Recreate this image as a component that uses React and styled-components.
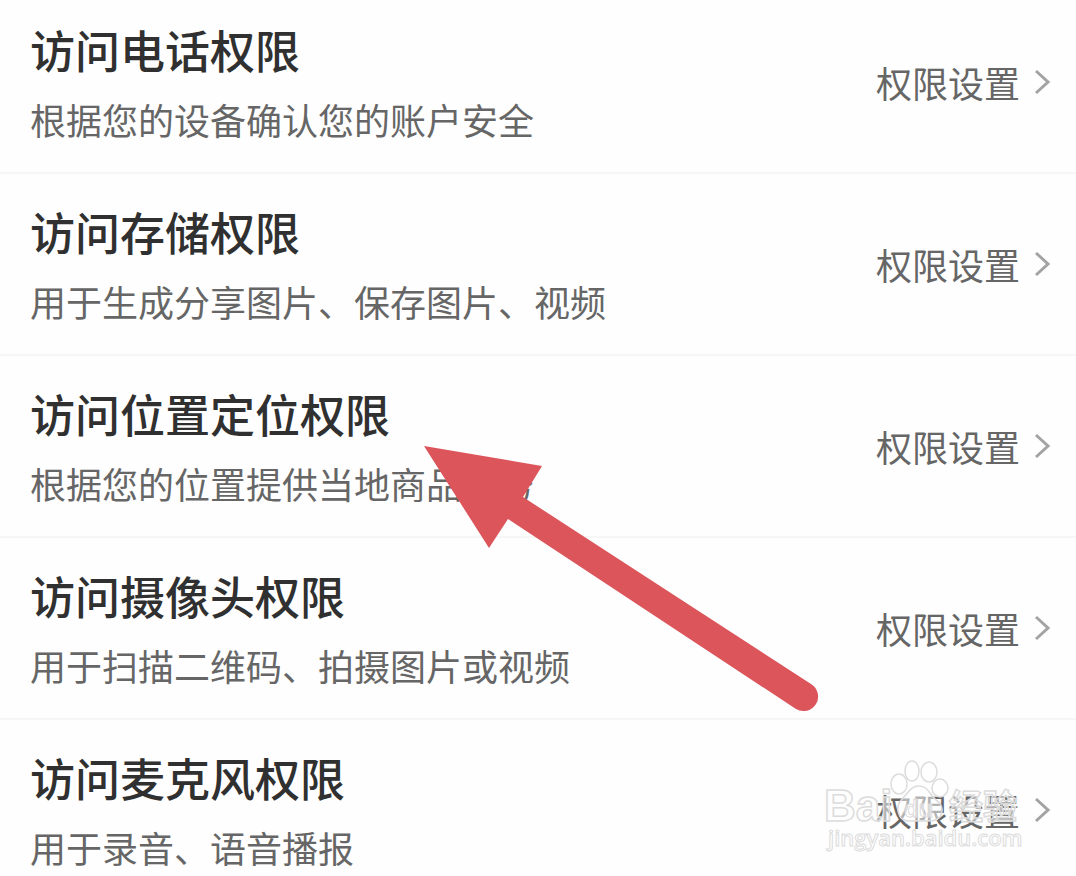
import React from "react";
import styled, { createGlobalStyle } from "styled-components";

const GlobalStyle = createGlobalStyle`
  body {
    margin: 0;
    background: #fefefe;
    font-family: "Noto Sans CJK SC", sans-serif;
  }
`;

const Page = styled.main`
  position: relative;
  overflow: hidden;
`;

const List = styled.ul`
  margin: 0;
  padding: 0;
  list-style: none;
`;

const Row = styled.li`
  display: flex;
  align-items: center;
  justify-content: space-between;
  padding: 28px 24px 29px 30px;
  border-bottom: 2px solid #f6f6f6;

  &:first-child {
    padding-top: 20px;
  }

  &:last-child {
    border-bottom: 0;
    padding-bottom: 4px;
  }
`;

const Copy = styled.div`
  display: flex;
  flex-direction: column;
  gap: 15px;
`;

const Title = styled.h2`
  margin: 0;
  font-size: 45px;
  line-height: 60px;
  font-weight: 500;
  color: #303030;
`;

const Description = styled.p`
  margin: 0;
  font-size: 36px;
  line-height: 48px;
  font-weight: 400;
  color: #666;
`;

const SettingsLink = styled.a`
  display: flex;
  align-items: center;
  gap: 12px;
  font-size: 36px;
  line-height: 48px;
  color: #666;
  text-decoration: none;
`;

const Chevron = styled.svg`
  width: 20px;
  height: 28px;
  fill: none;
  stroke: #a3a3a3;
  stroke-width: 3;
`;

const Arrow = styled.svg`
  position: absolute;
  left: 420px;
  top: 440px;
  width: 400px;
  height: 280px;
  pointer-events: none;
`;

const Watermark = styled.svg`
  position: absolute;
  right: 52px;
  bottom: 15px;
  width: 204px;
  height: 100px;
  pointer-events: none;
`;

const permissions = [
  ["访问电话权限", "根据您的设备确认您的账户安全"],
  ["访问存储权限", "用于生成分享图片、保存图片、视频"],
  ["访问位置定位权限", "根据您的位置提供当地商品服务"],
  ["访问摄像头权限", "用于扫描二维码、拍摄图片或视频"],
  ["访问麦克风权限", "用于录音、语音播报"],
];

function PermissionRow({ title, description }) {
  return (
    <Row>
      <Copy>
        <Title>{title}</Title>
        <Description>{description}</Description>
      </Copy>
      <SettingsLink href="#">
        权限设置
        <Chevron viewBox="0 0 20 28" aria-hidden="true">
          <path d="M4 3 L16 14 L4 25" />
        </Chevron>
      </SettingsLink>
    </Row>
  );
}

export default function App() {
  return (
    <Page>
      <GlobalStyle />
      <List>
        {permissions.map(([title, description]) => (
          <PermissionRow key={title} title={title} description={description} />
        ))}
      </List>
      <Arrow viewBox="420 440 400 280" aria-hidden="true">
        <path
          fill="#db555b"
          d="M424 446 L542 466 L523 497 L811 684 A14 14 0 0 1 796 709 L508 519 L489 548 Z"
        />
      </Arrow>
      <Watermark viewBox="820 760 204 100" aria-hidden="true">
        <g fill="#fff" fillOpacity="0.5" stroke="#dcdcdc" strokeWidth="1.5">
          <ellipse cx="899" cy="784" rx="8" ry="10" />
          <ellipse cx="912" cy="771" rx="7" ry="10" />
          <ellipse cx="929" cy="772" rx="8" ry="10" />
          <ellipse cx="940" cy="788" rx="8" ry="9" />
          <path d="M919 786 C910 786 908 794 902 799 C895 806 897 821 909 821 L929 821 C944 821 946 806 936 800 C930 795 928 786 919 786 Z" />
          <g fontFamily="Liberation Sans, sans-serif" fontWeight="700">
            <text x="824" y="821" fontSize="44">Bai</text>
            <text x="904" y="817" fontSize="24" strokeWidth="1">du</text>
          </g>
          <text x="949" y="819" fontSize="34" fontWeight="700" fontFamily="Noto Sans CJK SC, sans-serif">经验</text>
          <text x="828" y="846" fontSize="22" strokeWidth="1" fontWeight="600" fontFamily="Open Sans, sans-serif">jingyan.baidu.com</text>
        </g>
      </Watermark>
    </Page>
  );
}
